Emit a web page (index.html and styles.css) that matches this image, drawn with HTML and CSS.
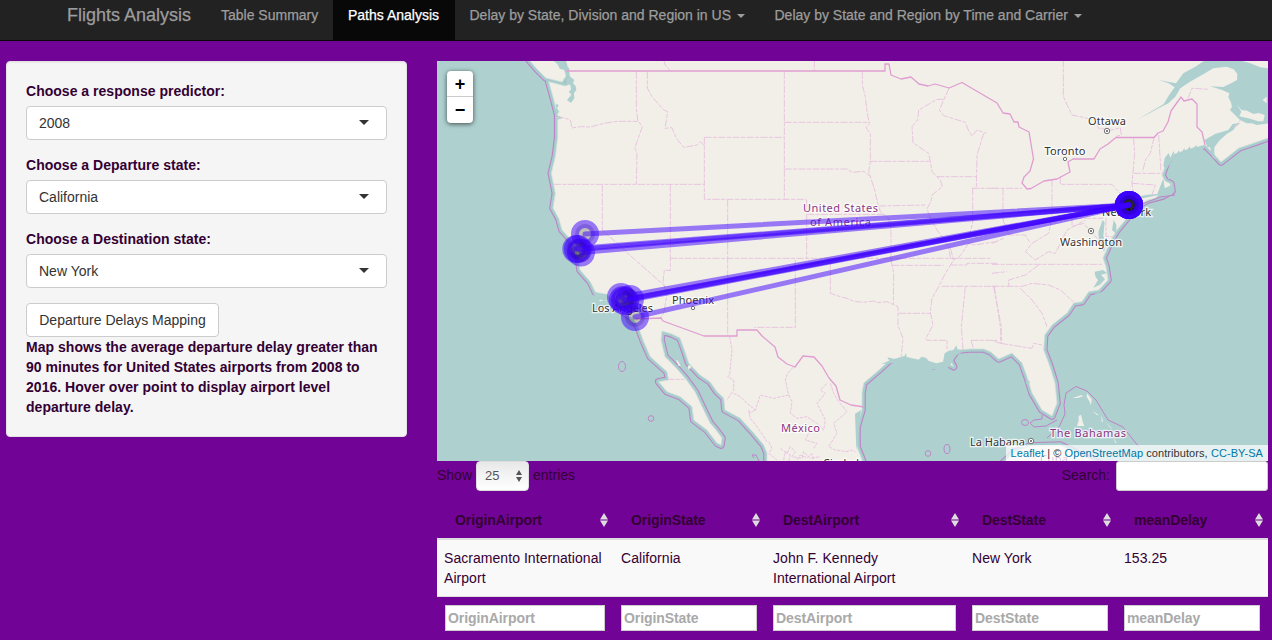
FILE: index.html
```html
<!DOCTYPE html>
<html lang="en">
<head>
<meta charset="utf-8">
<title>Flights Analysis</title>
<link rel="stylesheet" href="styles.css">
</head>
<body>
<nav class="navbar">
  <span class="brand">Flights Analysis</span>
  <a class="tab tab-summary">Table Summary</a>
  <a class="tab active">Paths Analysis</a>
  <a class="tab tab-region">Delay by State, Division and Region in US <i class="caret"></i></a>
  <a class="tab tab-carrier">Delay by State and Region by Time and Carrier <i class="caret"></i></a>
</nav>
<div class="layout">
  <aside class="well">
    <label>Choose a response predictor:</label>
    <div class="select"><span>2008</span><i class="arrow"></i></div>
    <label>Choose a Departure state:</label>
    <div class="select"><span>California</span><i class="arrow"></i></div>
    <label>Choose a Destination state:</label>
    <div class="select"><span>New York</span><i class="arrow"></i></div>
    <button class="btn">Departure Delays Mapping</button>
    <p class="note">Map shows the average departure delay greater than<br>90 minutes for United States airports from 2008 to<br>2016. Hover over point to display airport level<br>departure delay.</p>
  </aside>
  <main class="main">
    <div class="map">
      <svg class="tiles" viewBox="437 61 831 400" width="831" height="400">
        <defs>
          <path id="land" d="M560 40 L566 61 569 71 571 84 565 86 548.7 81.7 552 93.3 557.7 115 557.7 136.7 555.3 156.7 551.3 173.3 555.3 193.3 553 208 558.7 218.3 562 230 571 240 576 250 578.7 260 580 270 590.3 281.7 595.3 292 607 295 615 303 622 311 633.7 319 638.7 328.3 643.7 341.7 650.3 356.7 667 371.7 668.7 380 658.7 381.7 667 391.7 680.3 396.7 692 406.7 693.7 420 707 430 717 443 721 445 722 438 716 430 710 423 703.7 410 695 391.7 685 378 675 366.7 665 356.7 661 340 662 331 672 334 680 338 683.7 348 688.7 363 700 375 710 381.7 717 391.7 723.7 398 725 410 740 418 753.7 433 763.7 445 767 453 767 480 870 480 861 457 857 447 857 427 862 410 862 393 863.7 383 877 371.7 890 360 903.7 356.7 920 360 933.7 366 947 363 953.7 366.7 950 360 957 350 970 349 983.7 349 991 352 998.7 359 1012 353 1022 363 1027 376.7 1032 393 1042 410 1052 416 1057 403 1055 383 1050 366.7 1043.7 350 1044.7 335 1052 325 1067 313 1073.7 303 1082 301.7 1088.7 291.7 1098.7 290 1108 280 1106 266.7 1103 258 1111 240 1117 230 1128.7 216 1133 208 1148 200 1163 196 1172 191 1171 184 1165 181 1162 175 1167 161 1175 154 1188.7 149 1205 145 1211 151 1221 162 1239 148 1251 144 1285 132 1285 40 Z"/>
          <path id="island" d="M522 50 L530 61 536 68 546 78 562 82 566 76 564 69 555 62 553 50Z"/>
          <path id="cuba" d="M1000 466 L1015 452 1030 446 1060 445 1080 455 1110 468Z"/>
        </defs>
        <rect x="437" y="61" width="831" height="400" fill="#aed1d0"/>
        <g fill="none" stroke="#bd83c7" stroke-width="7.6" stroke-linejoin="round"><use href="#island"/><use href="#land"/><use href="#cuba"/></g>
        <g fill="none" stroke="#a6cccb" stroke-width="5.4" stroke-linejoin="round"><use href="#island"/><use href="#land"/><use href="#cuba"/></g>
        <g fill="#f2efe9" stroke="#d2e0db" stroke-width=".8"><use href="#land"/><use href="#island"/><use href="#cuba"/></g>

        <!-- inland water, scaled by three in each sheet -->
        <g transform="translate(437 60) scale(.33333)" fill="#aed1d0">
          <path d="M345 0 L360 8 368 26 382 30 392 50 385 68 400 75 402 88 396 96 403 104 390 120 402 129 412 115 411 100 418 90 416 78 408 70 412 60 400 50 394 40 397 25 386 18 378 0Z"/>
          <path d="M357 130 L365 136 360 145 367 155 358 165 380 173 358 180Z"/>
          <path d="M470 700 L510 702 538 735 505 732 478 728Z"/>
          <path d="M485 721 l8 -2 6 3 -9 2z M505 720 l6 1 -5 2z" fill="#f2efe9"/>
        </g>
        <g transform="translate(437 260) scale(.33333)" fill="#f2efe9">
          <path d="M717 300 l6 2 8 16 -6 0z M752 320 l6 -6 5 7 -8 8z"/>
        </g>
        <g transform="translate(992 60) scale(.33333)" fill="#aed1d0">
          <path d="M432 181 L485 150 515 132 532 104 548 82 530 70 500 60 552 70 574 40 610 20 640 0 840 0 840 190 829 190 794 195 780 190 764 190 744 180 729 165 714 150 720 140 716 125 709 112 712 100 690 90 674 85 655 79 694 81 720 68 735 60 736 42 725 28 704 20 664 25 630 45 594 65 565 85 550 110 529 130 505 142 475 158Z"/>
          <path d="M638 240 L669 222 709 210 722 192 745 188 730 202 724 210 704 222 684 240 667 262 667 280 672 300 662 292 654 262 646 262Z"/>
          <path d="M740 0 L840 0 830 25 805 22 775 10Z M734 133 L748 150 765 152 785 162 800 159 818 165 814 184 798 184 775 176 742 169 748 155Z M812 120 l12 -10 0 20z" fill="#f2efe9"/>
          <path d="M518 294 l12 -15 5 14 10 -20 5 18 10 -20 5 12 12 -18 4 12 12 -18 4 12 16 -16 2 14 10 -10 12 4 -8 14 -28 6 -20 6 -15 8 -28 8 -16 24 -8 -12z M514 355 l4 30 16 -8 5 -14 7 23 -8 22 -28 3 -20 2 10 -8 -48 10 -20 -6 -50 15 -17 14 3 -14 60 -12 38 -8 30 -2z"/>
          <path d="M332 480 l-13 35 2 25 15 35 6 -20 -8 -28 4 -40z M365 480 l-5 30 13 12 0 -28z"/>
          <path d="M308 640 l25 -7 12 10 -18 4 12 14 -15 16 -20 7 14 -22z" transform="translate(0 62)"/>
        </g>
        <g transform="translate(992 260) scale(.33333)">
          <path d="M308 35 l25 -5 12 10 -18 4 12 14 -15 16 -20 9 14 -22 -8 -12z M100 368 l8 -8 6 6 -6 10z" fill="#aed1d0"/>
          <path d="M260 468 l7 -4 6 24 4 10 -22 0 5 -15z M242 414 l25 -8 8 2 -18 6z M285 400 l14 18 -2 18 -5 -12 -8 -14z M300 452 l20 12 -4 2z M328 465 l5 20 -4 0z M340 485 l20 20 -3 0z M365 530 l8 20 -4 -2z" fill="#f2efe9"/>
        </g>
        <g transform="translate(717 260) scale(.33333)" fill="#aed1d0">
          <path d="M492 312 l25 -10 -6 -10 10 2 12 4 30 -10 4 -10 2 14 35 8 10 -10 14 4 6 8 24 8 20 -5 5 -25 12 -8 14 -2 10 -14 2 12 20 4 -25 15 -20 35 -30 8 -60 -6 -60 -16z M414 462 l18 -12 -8 70 -6 50z"/>
        </g>
        <g class="bounds" transform="translate(437 60) scale(.33333)">
          <path d="M680 0 l5 15 14 16 M598 35 V145 L602 180 616 200 600 245 594 265 600 280 598 372 M631 35 V84 L645 110 680 150 692 155 684 205 705 203 718 235 740 262 780 255 790 245 802 257 M358 173 L380 173 400 180 405 204 430 200 460 201 500 190 540 184 602 184 M350 373 H802 M802 232 H1041 M802 232 V418 H1108 M496 373 V510 L595 600 686 680 M700 373 V632 L682 630 678 665 690 705 680 760 670 775 M700 595 H1660 M872 420 V828 M690 958 H742"/>
        </g>
        <g class="bounds" transform="translate(717 60) scale(.33333)">
          <path d="M292 0 V31 M202 35 V418 M202 187 H457 M436 35 V75 L445 110 450 155 457 190 447 203 460 220 V304 L455 335 460 350 473 390 482 430 490 455 515 475 522 510 V600 M202 327 H390 L405 337 440 334 460 349 M458 304 H638 M486 438 L625 435 M696 85 L680 120 667 150 680 167 745 187 755 213 765 228 780 210 808 220 M680 118 H660 L605 150 602 180 585 200 588 248 635 280 640 305 645 335 670 360 676 380 645 405 642 425 630 446 640 475 660 510 675 530 695 560 700 595 720 598 735 580 755 550 770 555 840 545 M800 220 L780 285 778 383 M660 350 H780 M765 385 H840 M767 385 V490 L755 530 M269 463 H505 M269 463 V595 M269 420 V463 M700 565 L710 600 685 640 665 680 645 715 640 755 648 795 627 835 630 841 H690 V868 M522 600 L530 640 529 735 M235 600 V802 H112 M340 610 V700 L370 710 390 715 410 724 440 727 470 723 480 728 510 725 543 740 V797 L558 835 552 895 M524 616 H680 M545 760 H640 M675 679 H840 M700 615 H750 V610 H840 M745 680 L733 800 738 868 M762 841 H840 M762 841 L770 868 M832 680 L850 800 855 850"/>
          <path class="mexico" d="M38 830 L45 870 38 945 32 950 50 960 50 990 30 1020 M50 1000 L70 1010 90 1030 115 1050 130 1005 170 1015 215 1005 205 960 212 940 230 920 M215 1005 L225 1025 220 1060 240 1075 270 1070 300 1090 320 1110 325 1080 315 1060 300 1030 325 1000 310 990 330 970 M95 1050 L100 1075 120 1100 150 1145 M115 1050 L95 1060 M340 970 L350 1000 365 1025 390 1055 350 1090 360 1120 335 1160 355 1170 390 1175 400 1170 415 1175 M280 1110 L265 1140 300 1150 290 1165 M190 1165 l20 15 10 -20 15 15 -10 15 30 5 5 -20 20 20 30 -5 M200 1200 l5 -25 15 10 -5 20 M155 1145 l10 20 -10 15 25 20 M240 1200 l10 -15 20 8 15 -12 5 18"/>
        </g>
        <g class="bounds" transform="translate(992 60) scale(.33333)">
          <path d="M214 0 V110 L240 165 310 180 320 205 360 210 385 203 388 225 370 230 M425 235 L428 280 420 370 425 410 M487 230 L475 280 460 300 452 335 M500 225 L507 335 M425 340 H515 M420 370 L490 375 480 405 M205 350 V373 H360 L385 400 375 425 395 445 M0 385 H90 M33 385 V480 M180 360 V475 H330 L350 460 M180 475 L170 520 120 550 100 575 130 600 170 575 190 580 205 550 225 510 280 480 M240 475 V500 L275 490 320 540 M342 475 V530 H365 M33 480 L50 525 100 525 115 550 M0 550 L35 535 M0 640 L45 635 M0 613 H330 M140 615 L100 645 50 660 50 679 M0 679 H90 L120 670 170 675 205 690 245 726 M85 685 L120 720 150 760 165 800 M5 680 L28 800 25 850 0 841 M25 850 L120 865 125 850 150 855 M588 115 L600 85 650 88 M725 205 L745 180"/>
        </g>
        <g class="borders">
          <path d="M566 71 H885 V64 L889 64 891 75 901 79 911 77 919 84 928 86 935 84 949 88 962 82.5 997 103 1003 113 1010 114 1014 122 1018 122 1019 127 1029 132 1033.500 159 1030 171 1024 177 1022 183 1027 189 1031 188.500 1044 181 1057 179 1070 172 1068 162 1073 159 1094 159 1100 149 1108 144 1116 137.500 1154 137.500 1158 133 1163 131 1168 122 1171 111 1181 97 1184 101 1192 99 1197 104 V127 L1202 132 1205 145"/>
          <path d="M636 319 L661 318 663 321 704 336 H737 V330 H757 L762 336 775 347 778 357 787 364 795 367 803 356 814 357 822 366 829 378 836 386 840 400 851 405 864 407"/>
        </g>
        <g fill="none" stroke="#bd83c7" stroke-width="1"><circle cx="651" cy="418.500" r="2.800"/><ellipse cx="622" cy="366.500" rx="3.500" ry="5"/><circle cx="928" cy="453.500" r="2.800"/><ellipse cx="947" cy="449" rx="3" ry="4.500"/><ellipse cx="1025" cy="422.500" rx="3.500" ry="3"/><path d="M1047 438 L1059 427 1065 414 1064 405 1066 393 1076 386.500 1087 391 1096 400 1108 420 1123 427 1139 447 M1042 415 L1042 419 1034 420 1030 423 1034 427 1046 426 1057 420 M1135 201 L1140 205 1160 197 1175 195 M754 458 l-2 -3 4 0 3 6"/></g>

        <g class="place">
          <text x="1088" y="125" textLength="38">Ottawa</text><text x="1044.500" y="155" textLength="41">Toronto</text>
          <text x="1060" y="246" textLength="62">Washington</text><text x="1102" y="216" textLength="49">New York</text>
          <text x="592" y="312" textLength="61">Los Angeles</text><text x="672" y="304" textLength="42">Phoenix</text>
          <text x="970" y="446" textLength="55">La Habana</text><text x="823" y="467" textLength="36">Ciudad</text>
        </g>
        <g class="country">
          <text x="803" y="212" textLength="75">United States</text><text x="810" y="226" textLength="61">of America</text>
          <text x="781" y="432" textLength="39">México</text><text x="1050" y="436.500" textLength="76">The Bahamas</text><text x="1040" y="463" textLength="28">Cuba</text>
        </g>
        <g fill="#fff" stroke="#555" stroke-width=".8"><circle cx="1107" cy="131" r="2.700"/><circle cx="1091" cy="231" r="2.700"/><circle cx="1031" cy="441" r="2.700"/><circle cx="1065" cy="159" r="1.700"/><circle cx="693" cy="308" r="1.700"/></g>
        <g fill="#555"><circle cx="1107" cy="131" r="1"/><circle cx="1091" cy="231" r="1"/><circle cx="1031" cy="441" r="1"/></g>
        <g class="airports">
          <circle cx="585" cy="234" r="10"/><circle cx="576.300" cy="249" r="10"/><circle cx="578" cy="249" r="10"/><circle cx="581" cy="252.500" r="10"/>
          <circle cx="621" cy="297" r="10"/><circle cx="623" cy="300" r="10"/><circle cx="625" cy="301" r="10"/><circle cx="630" cy="299" r="10"/><circle cx="635" cy="317" r="10"/>
          <circle cx="1129" cy="205" r="10"/><circle cx="1129" cy="205" r="10"/><circle cx="1129" cy="205" r="10"/><circle cx="1129" cy="205" r="10"/><circle cx="1129" cy="205" r="10"/><circle cx="1129" cy="205" r="10"/><circle cx="1129" cy="205" r="10"/><circle cx="1129" cy="205" r="10"/>
        </g>
        <g class="routes">
          <path d="M585 234 L1129 205"/><path d="M576.300 248.500 L1129 205"/><path d="M578 249.500 L1129 205"/><path d="M581 252.500 L1129 205"/>
          <path d="M621 297 L1129 205"/><path d="M625 301 L1129 205"/><path d="M626 299.500 L1129 205"/><path d="M630 299 L1129 205"/><path d="M635 317 L1129 205"/>
        </g>
      </svg>
      <div class="zoom"><span>+</span><span>−</span></div>
      <div class="credit"><a>Leaflet</a> | © <a>OpenStreetMap</a> contributors, <a>CC-BY-SA</a></div>
    </div>
    <div class="controls">
      <div class="length">Show <span class="count">25<svg width="6" height="12" viewBox="0 0 6 12"><path d="M0 5 L3 0 6 5Z M0 7 L3 12 6 7Z" fill="#555"/></svg></span> entries</div>
      <div class="search">Search: <span class="searchbox"></span></div>
    </div>
    <div class="grid head">
      <div>OriginAirport<svg class="sort" viewBox="0 0 8 14"><path d="M0 6.500 L4 0 8 6.500Z M0 7.500 H8 L4 14Z"/></svg></div>
      <div>OriginState<svg class="sort" viewBox="0 0 8 14"><path d="M0 6.500 L4 0 8 6.500Z M0 7.500 H8 L4 14Z"/></svg></div>
      <div>DestAirport<svg class="sort" viewBox="0 0 8 14"><path d="M0 6.500 L4 0 8 6.500Z M0 7.500 H8 L4 14Z"/></svg></div>
      <div>DestState<svg class="sort" viewBox="0 0 8 14"><path d="M0 6.500 L4 0 8 6.500Z M0 7.500 H8 L4 14Z"/></svg></div>
      <div>meanDelay<svg class="sort" viewBox="0 0 8 14"><path d="M0 6.500 L4 0 8 6.500Z M0 7.500 H8 L4 14Z"/></svg></div>
    </div>
    <div class="grid row">
      <div>Sacramento International<br>Airport</div><div>California</div><div>John F. Kennedy<br>International Airport</div><div>New York</div><div>153.25</div>
    </div>
    <div class="grid filters">
      <div><span>OriginAirport</span></div><div><span>OriginState</span></div><div><span>DestAirport</span></div><div><span>DestState</span></div><div><span>meanDelay</span></div>
    </div>
  </main>
</div>
</body>
</html>
```
FILE: styles.css
```css
* { box-sizing: border-box; }
body { margin: 0; height: 640px; overflow: hidden; background: #710397; color: #330033; font: 14px/20px "Liberation Sans", Arial, sans-serif; }
.navbar { display: flex; height: 41px; padding-left: 52px; background: #222; border-bottom: 1px solid #080808; color: #9d9d9d; white-space: nowrap; -webkit-text-stroke: .25px; }
.brand { width: 154px; padding: 5px 15px; font-size: 18px; }
.tab { padding: 5px 15px 15px; }
.tab-summary { width: 127px; }
.active { width: 122px; background: #080808; color: #fff; }
.tab-region { width: 305px; padding-left: 14.500px; }
.tab-carrier { padding-left: 14.500px; }
.caret { display: inline-block; margin-left: 2px; vertical-align: middle; border: 4px solid transparent; border-top-color: currentColor; border-bottom: 0; }
.layout { display: grid; grid-template-columns: 401px 831px; column-gap: 30px; align-items: start; padding: 20px 4px 0 6px; }
.well { height: 376px; padding: 19px; background: #f5f5f5; border: 1px solid #e3e3e3; border-radius: 4px; box-shadow: inset 0 1px 1px rgba(0,0,0,.05); }
.well label { display: block; margin-bottom: 5px; font-weight: bold; letter-spacing: .02px; }
.select { display: flex; align-items: center; justify-content: space-between; height: 34px; margin-bottom: 15px; padding: 0 17px 0 12px; background: #fff; border: 1px solid #ccc; border-radius: 4px; color: #333; }
.arrow { border: 5px solid transparent; border-top-color: #333; border-bottom: 0; margin-top: -2px; }
.btn { display: block; width: 193px; height: 34px; padding: 0; background: #fff; border: 1px solid #ccc; border-radius: 4px; color: #333; font: inherit; white-space: nowrap; }
.note { margin: 0; font-weight: bold; white-space: nowrap; letter-spacing: .03px; }
.map { position: relative; height: 400px; overflow: hidden; }
.tiles { display: block; }
.bounds { fill: none; stroke: #e8c4e0; stroke-width: 3; stroke-dasharray: 22 4 12 4; }
.mexico { stroke-width: 3; stroke-dasharray: 10 3; }
.borders { fill: none; stroke: #df9dd1; stroke-width: 1.3; stroke-linejoin: round; }
.place, .country { font: 11px "Noto Sans", sans-serif; fill: #333; stroke: rgba(255,255,255,.75); stroke-width: 2.5px; paint-order: stroke; }
.country { fill: #8b3585; }
.airports { fill: #000; fill-opacity: .2; stroke: #3c00ff; stroke-width: 8; stroke-opacity: .5; }
.routes { fill: none; stroke: #3c00ff; stroke-width: 5; stroke-opacity: .5; stroke-linecap: round; }
.zoom { position: absolute; left: 10px; top: 10px; width: 26px; background: #fff; border-radius: 4px; box-shadow: 0 1px 5px rgba(0,0,0,.65); color: #000; font-weight: bold; font-size: 18px; line-height: 26px; text-align: center; }
.zoom span { display: block; height: 26px; }
.zoom span:first-child { border-bottom: 1px solid #ccc; }
.credit { position: absolute; right: 0; bottom: 0; height: 16px; padding: 0 5px; background: rgba(255,255,255,.7); color: #333; font-size: 11px; line-height: 16px; letter-spacing: .07px; white-space: nowrap; }
.credit a { color: #0078a8; }
.controls { display: flex; justify-content: space-between; height: 30px; }
.length, .search { display: flex; line-height: 28px; }
.count { display: flex; align-items: center; justify-content: space-between; width: 53px; height: 30px; margin: 0 4px; padding: 0 6px 0 8px; background: linear-gradient(#e8e8e8, #fff); border: 1px solid #ddd; border-radius: 4px; color: #555; font-size: 13px; }
.searchbox { width: 152px; height: 30px; margin-left: 6px; background: #fff; border: 1px solid #ccc; border-radius: 3px; }
.grid { display: grid; grid-template-columns: 176px 152px 199px 152px 152px; }
.head { height: 49px; padding-top: 19px; border-bottom: 2px solid #ddd; font-weight: bold; }
.head div { display: flex; align-items: center; justify-content: space-between; height: 20px; padding: 0 5.500px 0 18px; letter-spacing: -.08px; }
.sort { width: 8px; height: 14px; fill: #ddd; }
.row { height: 57px; padding-top: 8px; background: #f9f9f9; border-bottom: 1px solid #ddd; }
.row div { padding-left: 8px; white-space: nowrap; letter-spacing: .05px; }
.row div:first-child { padding-left: 7px; }
.filters { padding-top: 8px; }
.filters div { padding: 0 8px; }
.filters span { display: block; height: 26px; padding-left: 2px; background: #fff; border: 1px solid #ccc; color: #a9a9a9; font-weight: bold; line-height: 24px; letter-spacing: -.08px; }
```
